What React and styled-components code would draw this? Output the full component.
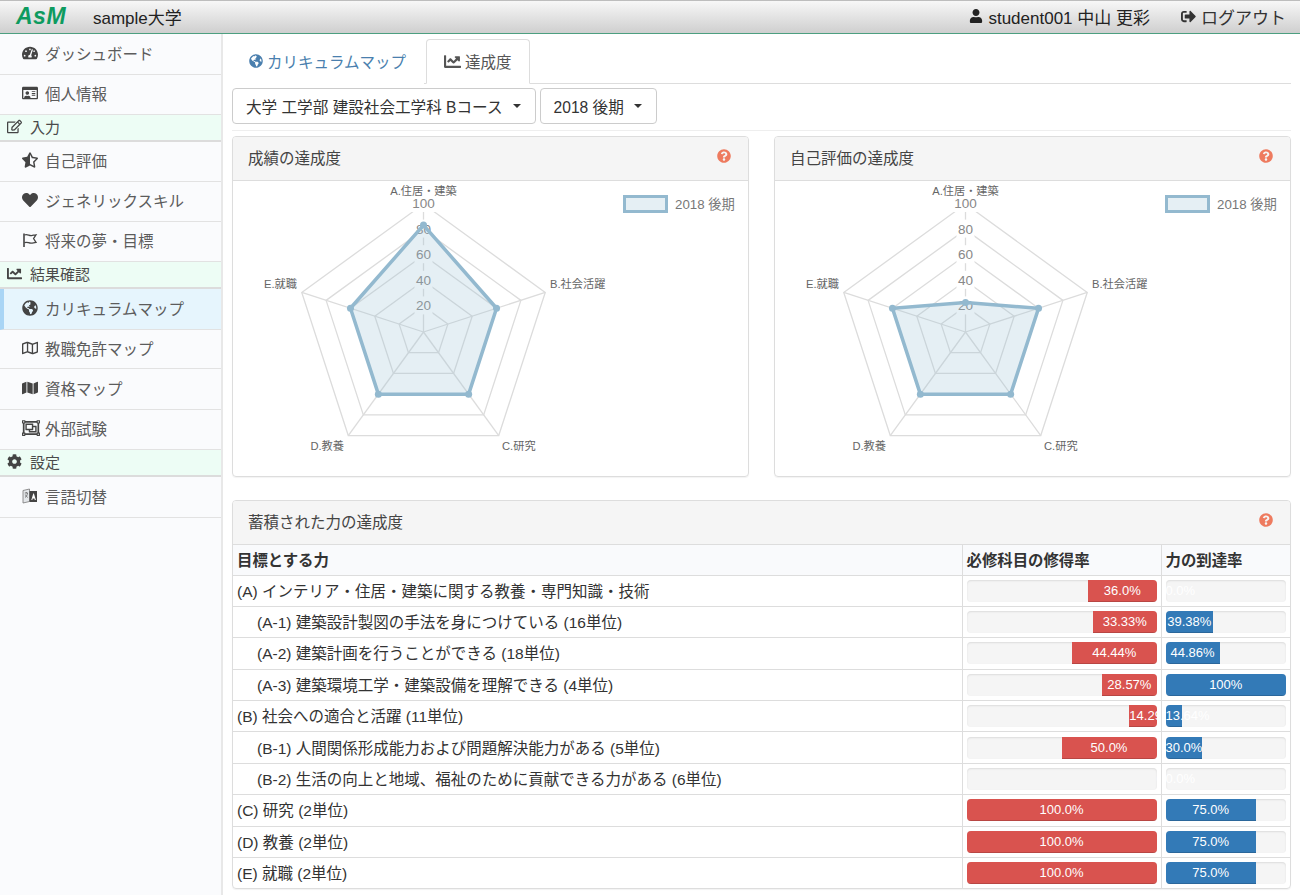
import React from "react";
import styled, { createGlobalStyle } from "styled-components";
import {
  FaTachometerAlt,
  FaRegIdCard,
  FaRegEdit,
  FaStarHalfAlt,
  FaHeart,
  FaChartLine,
  FaGlobeAmericas,
  FaRegMap,
  FaMap,
  FaRegObjectGroup,
  FaCog,
  FaUser,
  FaSignOutAlt,
  FaQuestionCircle,
} from "react-icons/fa";

const GlobalStyle = createGlobalStyle`
  html, body {
    margin: 0;
    padding: 0;
    background: #fff;
    overflow: hidden;
  }
  body {
    font-family: "Liberation Sans", "Noto Sans CJK JP", sans-serif;
    font-size: 15.5px;
    color: #333;
  }
  * { box-sizing: border-box; }
`;

// 細い旗のアイコン
const FlagIcon = ({ size }) => (
  <svg width={size} height={size} viewBox="0 0 16 16" fill="none" stroke="currentColor" strokeWidth="1.3">
    <path d="M2 1.5v13.5" strokeWidth="1.6" />
    <path d="M2.5 3c3-1.3 4.5 1 7 .6 1.6-.2 3-.7 4.5-.8L11.6 6.6 14 10.4c-2 .1-3 .7-4.8.8-2.5.2-4-1.8-6.7-.5" />
  </svg>
);

// 言語切替のアイコン
const TranslateIcon = ({ size }) => (
  <svg width={size} height={size} viewBox="0 0 16 16">
    <path d="M1 2.5l6.5-1.5v12.5L1 15z" fill="#e4e7ea" stroke="#777" strokeWidth="0.8" />
    <path d="M7.5 3h7.5v11H7.5z" fill="#444" />
    <path d="M9.3 12l2-6.500h.6l2 6.500h-1.100l-.4-1.500h-1.700l-.4 1.500z" fill="#fff" />
    <path d="M2.8 5h3M4.3 4v1M3 9.500c1.500-1 2.300-2.500 2.500-4.500M3.300 6.500c.5 1.300 1.300 2.300 2.500 3" fill="none" stroke="#555" strokeWidth="0.7" />
  </svg>
);

const MENU = [
  { label: "ダッシュボード", icon: FaTachometerAlt, h: 40 },
  { label: "個人情報", icon: FaRegIdCard, h: 40 },
  { section: "入力", icon: FaRegEdit },
  { label: "自己評価", icon: FaStarHalfAlt, h: 40 },
  { label: "ジェネリックスキル", icon: FaHeart, h: 40 },
  { label: "将来の夢・目標", icon: FlagIcon, h: 40 },
  { section: "結果確認", icon: FaChartLine },
  { label: "カリキュラムマップ", icon: FaGlobeAmericas, h: 41, active: true },
  { label: "教職免許マップ", icon: FaRegMap, h: 39 },
  { label: "資格マップ", icon: FaMap, h: 41 },
  { label: "外部試験", icon: FaRegObjectGroup, h: 40, big: true },
  { section: "設定", icon: FaCog },
  { label: "言語切替", icon: TranslateIcon, h: 41 },
];

const ROWS = [
  { name: "(A) インテリア・住居・建築に関する教養・専門知識・技術", req: 36, reqText: "36.0%", power: 0, powerText: "0.0%" },
  { name: "(A-1) 建築設計製図の手法を身につけている (16単位)", sub: true, req: 33.33, reqText: "33.33%", power: 39.38, powerText: "39.38%" },
  { name: "(A-2) 建築計画を行うことができる (18単位)", sub: true, req: 44.44, reqText: "44.44%", power: 44.86, powerText: "44.86%" },
  { name: "(A-3) 建築環境工学・建築設備を理解できる (4単位)", sub: true, req: 28.57, reqText: "28.57%", power: 100, powerText: "100%" },
  { name: "(B) 社会への適合と活躍 (11単位)", req: 14.29, reqText: "14.29%", power: 13.64, powerText: "13.64%" },
  { name: "(B-1) 人間関係形成能力および問題解決能力がある (5単位)", sub: true, req: 50, reqText: "50.0%", power: 30, powerText: "30.0%" },
  { name: "(B-2) 生活の向上と地域、福祉のために貢献できる力がある (6単位)", sub: true, req: 0, reqText: "0.0%", power: 0, powerText: "0.0%" },
  { name: "(C) 研究 (2単位)", req: 100, reqText: "100.0%", power: 75, powerText: "75.0%" },
  { name: "(D) 教養 (2単位)", req: 100, reqText: "100.0%", power: 75, powerText: "75.0%" },
  { name: "(E) 就職 (2単位)", req: 100, reqText: "100.0%", power: 75, powerText: "75.0%" },
];

// レーダーチャート
const CX = 190.5;
const CY = 151;
const R = 128;
const point = (i, pct) => {
  const a = (-90 + i * 72) * (Math.PI / 180);
  return [CX + (Math.cos(a) * R * pct) / 100, CY + (Math.sin(a) * R * pct) / 100];
};
const ring = (values) => values.map((v, i) => point(i, v).join(",")).join(" ");

const Radar = ({ data }) => {
  return (
    <svg width="515" height="295" style={{ display: "block" }}>
      {[20, 40, 60, 80, 100].map((v) => (
        <polygon key={v} points={ring([v, v, v, v, v])} fill="none" stroke="#dcdcdc" strokeWidth="1.3" />
      ))}
      {[0, 1, 2, 3, 4].map((i) => {
        const [x, y] = point(i, 100);
        return <line key={i} x1={CX} y1={CY} x2={x} y2={y} stroke="#dcdcdc" strokeWidth="1.3" />;
      })}
      {[20, 40, 60, 80, 100].map((v) => {
        const y = CY - (R * v) / 100;
        return (
          <g key={v}>
            <rect x={CX - (v === 100 ? 13 : 9)} y={y - 10} width={v === 100 ? 26 : 18} height="18" fill="#fff" />
            <text x={CX} y={y + 4} textAnchor="middle" fontSize="13.5" fill="#888">
              {v}
            </text>
          </g>
        );
      })}
      <polygon points={ring(data)} fill="rgba(150,190,212,0.25)" stroke="#93b9cf" strokeWidth="3.5" />
      {data.map((v, i) => {
        const [x, y] = point(i, v);
        return <circle key={i} cx={x} cy={y} r="3.5" fill="#93b9cf" />;
      })}
      <g fontSize="11.2" fill="#666">
        <text x={CX} y="14" textAnchor="middle">A.住居・建築</text>
        <text x="317" y="107">B.社会活躍</text>
        <text x="269" y="269">C.研究</text>
        <text x="111" y="269" textAnchor="end">D.教養</text>
        <text x="64" y="107" textAnchor="end">E.就職</text>
      </g>
      <rect x="391.5" y="15.5" width="42" height="15" fill="rgba(150,190,212,0.25)" stroke="#93b9cf" strokeWidth="3" />
      <text x="442" y="28" fontSize="13.3" fill="#777">2018 後期</text>
    </svg>
  );
};

const Progress = ({ value, text, color }) => {
  return (
    <Track>
      <Bar $color={color} style={{ width: `${value}%` }}>
        {text}
      </Bar>
    </Track>
  );
};

const ChartPanel = ({ title, data }) => {
  return (
    <Panel>
      <PanelHead>
        <span>{title}</span>
        <Help />
      </PanelHead>
      <Radar data={data} />
    </Panel>
  );
};

const App = () => {
  return (
    <Page>
      <GlobalStyle />
      <Header>
        <Logo>AsM</Logo>
        <School>sample大学</School>
        <HeaderRight>
          <UserName>
            <FaUser size={14} />
            student001 中山 更彩
          </UserName>
          <Logout>
            <FaSignOutAlt size={15} />
            ログアウト
          </Logout>
        </HeaderRight>
      </Header>

      <Body>
        <Sidebar>
          {MENU.map((m) => {
            const Icon = m.icon;
            if (m.section) {
              return (
                <SectionRow key={m.section}>
                  <SectionIcon>
                    <Icon size={15} />
                  </SectionIcon>
                  {m.section}
                </SectionRow>
              );
            }
            return (
              <MenuItem key={m.label} $active={m.active} $h={m.h}>
                <MenuIcon>
                  <Icon size={m.big ? 18 : 16} />
                </MenuIcon>
                {m.label}
              </MenuItem>
            );
          })}
        </Sidebar>

        <Main>
          <Tabs>
            <Tab>
              <FaGlobeAmericas size={14} />
              カリキュラムマップ
            </Tab>
            <Tab $active>
              <FaChartLine size={17} />
              達成度
            </Tab>
          </Tabs>

          <Filters>
            <DropButton>
              大学 工学部 建設社会工学科 Bコース
              <Caret />
            </DropButton>
            <DropButton>
              2018 後期
              <Caret />
            </DropButton>
          </Filters>
          <Rule />

          <ChartGrid>
            <ChartPanel title="成績の達成度" data={[83.5, 60, 60, 60, 60]} />
            <ChartPanel title="自己評価の達成度" data={[23, 60, 60, 60, 60]} />
          </ChartGrid>

          <TablePanel>
            <PanelHead>
              <span>蓄積された力の達成度</span>
              <Help />
            </PanelHead>
            <Table>
              <colgroup>
                <col />
                <col width="199" />
                <col width="129" />
              </colgroup>
              <thead>
                <tr>
                  <Th>目標とする力</Th>
                  <Th>必修科目の修得率</Th>
                  <Th>力の到達率</Th>
                </tr>
              </thead>
              <tbody>
                {ROWS.map((r) => (
                  <tr key={r.name}>
                    <NameCell $sub={r.sub}>{r.name}</NameCell>
                    <BarCell>
                      <Progress value={r.req} text={r.reqText} color="#d9534f" />
                    </BarCell>
                    <BarCell>
                      <PowerTrack>
                        <PowerBar style={{ width: `${r.power}%` }}>{r.powerText}</PowerBar>
                      </PowerTrack>
                    </BarCell>
                  </tr>
                ))}
              </tbody>
            </Table>
          </TablePanel>
        </Main>
      </Body>
    </Page>
  );
};

const Page = styled.div`
  width: 1300px;
  height: 895px;
  overflow: hidden;
`;

const Header = styled.header`
  height: 34px;
  display: flex;
  align-items: center;
  padding: 0 14px 2px 16px;
  border-top: 1px solid #bdbdbd;
  border-bottom: 1px solid #4c9f80;
  background: linear-gradient(to bottom, #f7f7f7, #cfcfcf);
  color: #222;
`;

const Logo = styled.div`
  width: 77px;
  color: #0e9b5f;
  font-size: 23px;
  font-weight: bold;
  font-style: italic;
  letter-spacing: 0.5px;
`;

const School = styled.div`
  font-size: 17px;
`;

const HeaderRight = styled.div`
  margin-left: auto;
  display: flex;
  align-items: center;
  gap: 31px;
`;

const UserName = styled.div`
  display: flex;
  align-items: center;
  gap: 5px;
  font-size: 17px;
  color: #222;
`;

const Logout = styled.div`
  display: flex;
  align-items: center;
  gap: 5px;
  font-size: 17px;
  color: #333;
`;

const Body = styled.div`
  display: flex;
  height: 861px;
`;

const Sidebar = styled.nav`
  width: 223px;
  flex-shrink: 0;
  padding-top: 1px;
  background: #fafbfd;
  border-right: 2px solid #e8e8e8;
`;

const MenuItem = styled.div`
  height: ${(p) => p.$h}px;
  display: flex;
  align-items: center;
  padding-left: ${(p) => (p.$active ? 18 : 22)}px;
  padding-bottom: 3px;
  border-left: ${(p) => (p.$active ? "4px solid #a9d5f5" : "none")};
  border-bottom: 1px solid #e2e2e2;
  background: ${(p) => (p.$active ? "#e6f5fd" : "transparent")};
  color: #5c5c5c;
  font-size: 15.5px;
`;

const MenuIcon = styled.span`
  width: 23px;
  display: flex;
  align-items: center;
  color: #444;
`;

const SectionRow = styled.div`
  height: 27px;
  display: flex;
  align-items: center;
  padding-left: 7px;
  padding-bottom: 3px;
  background: #edfdf5;
  border-bottom: 2px solid #dcdcdc;
  color: #4a4a4a;
  font-size: 15px;
`;

const SectionIcon = styled.span`
  width: 23px;
  display: flex;
  align-items: center;
  color: #444;
`;

const Main = styled.main`
  flex: 1;
  min-width: 0;
  padding: 5px 9px 0 9px;
`;

const Tabs = styled.div`
  height: 45px;
  display: flex;
  border-bottom: 1px solid #ddd;
`;

const Tab = styled.div`
  height: 45px;
  display: flex;
  align-items: center;
  gap: 4px;
  padding: 0 17px 1px ${(p) => (p.$active ? 17 : 16)}px;
  margin-left: ${(p) => (p.$active ? "2px" : "0")};
  border: 1px solid ${(p) => (p.$active ? "#ddd" : "transparent")};
  border-bottom-color: ${(p) => (p.$active ? "#fff" : "transparent")};
  border-radius: 4px 4px 0 0;
  background: #fff;
  color: ${(p) => (p.$active ? "#555" : "#4a7fae")};
  font-size: 15.5px;
`;

const Filters = styled.div`
  display: flex;
  gap: 4px;
  margin-top: 4px;
`;

const DropButton = styled.div`
  height: 36px;
  display: flex;
  align-items: center;
  padding: 0 14px 0 13px;
  border: 1px solid #ccc;
  border-radius: 4px;
  background: #fff;
  color: #333;
  font-size: 15.6px;
`;

const Caret = styled.span`
  width: 0;
  height: 0;
  margin-left: 10px;
  border-top: 4px solid #333;
  border-left: 4px solid transparent;
  border-right: 4px solid transparent;
`;

const Rule = styled.div`
  height: 1px;
  margin: 6px 0 5px;
  background: #eee;
`;

const ChartGrid = styled.div`
  display: grid;
  grid-template-columns: 517px 517px;
  gap: 25px;
`;

const Panel = styled.section`
  height: 341px;
  border: 1px solid #ddd;
  border-radius: 4px;
  box-shadow: 0 1px 1px rgba(0, 0, 0, 0.05);
  overflow: hidden;
`;

const TablePanel = styled(Panel)`
  height: 389px;
  margin-top: 23px;
  width: 1059px;
`;

const PanelHead = styled.div`
  height: 44px;
  display: flex;
  align-items: center;
  justify-content: space-between;
  padding: 0 17px 3px 15px;
  background: #f5f5f5;
  border-bottom: 1px solid #ddd;
  color: #444;
  font-size: 15.5px;
`;

const Help = styled(FaQuestionCircle)`
  width: 14px;
  height: 14px;
  margin-top: -3px;
  color: #ee7b5f;
`;

const Table = styled.table`
  width: 100%;
  table-layout: fixed;
  border-collapse: collapse;
`;

const Th = styled.th`
  height: 30px;
  padding: 0 4px 2px;
  text-align: left;
  background: #f9fafc;
  color: #333;
  font-size: 15.4px;
  border-bottom: 1px solid #ddd;
  & + & {
    border-left: 1px solid #ddd;
  }
`;

const NameCell = styled.td`
  height: 31.4px;
  padding: 0 0 2px ${(p) => (p.$sub ? 24 : 4)}px;
  color: #333;
  font-size: 15.5px;
  border-bottom: 1px solid #ddd;
  white-space: nowrap;
  tr:last-child > & {
    border-bottom: none;
  }
`;

const BarCell = styled.td`
  height: 31.4px;
  padding: 0 4px;
  border-left: 1px solid #ddd;
  border-bottom: 1px solid #ddd;
  tr:last-child > & {
    border-bottom: none;
  }
`;

const Track = styled.div`
  height: 22px;
  display: flex;
  justify-content: flex-end;
  background: #f5f5f5;
  border-radius: 4px;
  box-shadow: inset 0 1px 2px rgba(0, 0, 0, 0.1);
  overflow: hidden;
`;

const Bar = styled.div`
  flex-shrink: 0;
  background: ${(p) => p.$color};
  color: #fff;
  font-size: 13px;
  line-height: 22px;
  text-align: center;
  white-space: nowrap;
  box-shadow: inset 0 -1px 0 rgba(0, 0, 0, 0.15);
`;

const PowerTrack = styled(Track)`
  justify-content: flex-start;
`;

const PowerBar = styled(Bar)`
  background: #337ab7;
`;

export default App;
